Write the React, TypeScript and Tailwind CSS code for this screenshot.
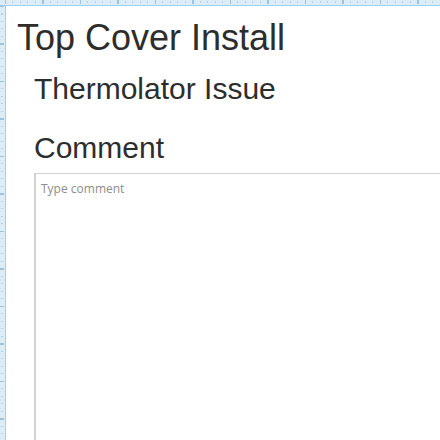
import React from 'react';

export default function App() {
  return (
    <div className="w-[440px] h-[440px] overflow-hidden bg-white grid grid-cols-[6px_1fr] grid-rows-[6px_1fr] font-['Liberation_Sans',Arial,sans-serif] text-[#2d2d2d]">
      {/* rulers */}
      <div className="col-span-2 bg-[#dcedf8] border-b border-[#94d3f6] bg-no-repeat [background-image:repeating-linear-gradient(90deg,#9cc3e0_0_1px,transparent_1px_37.5px),repeating-linear-gradient(90deg,#b0d2ea_0_1px,transparent_1px_7.5px)] [background-size:100%_4px,100%_2px] [background-position:5px_0,5px_1px]" />
      <div className="bg-[#dcedf8] border-r border-[#94d3f6] bg-no-repeat [background-image:repeating-linear-gradient(180deg,#9cc3e0_0_1px,transparent_1px_37.5px),repeating-linear-gradient(180deg,#b0d2ea_0_1px,transparent_1px_7.5px)] [background-size:4px_100%,2px_100%] [background-position:0_0,1px_0]" />

      <div className="pl-[11px] pt-[11px]">
        <h1 className="text-[36px] leading-[41px] font-normal">Top Cover Install</h1>
        <div className="pl-[17px]">
          <h2 className="mt-[13px] text-[30px] leading-[35px] font-normal">Thermolator Issue</h2>
          <h2 className="mt-[24px] text-[30px] leading-[35px] font-normal">Comment</h2>
          <textarea
            placeholder="Type comment"
            className="mt-[8px] block w-[440px] h-[320px] resize-none border border-l-2 border-[#d2d2d2] px-[5px] pt-[7px] pb-[5px] text-[12px] leading-[16px] font-['Open_Sans',sans-serif] placeholder:text-[#8e8e8e] outline-none"
          />
        </div>
      </div>
    </div>
  );
}
